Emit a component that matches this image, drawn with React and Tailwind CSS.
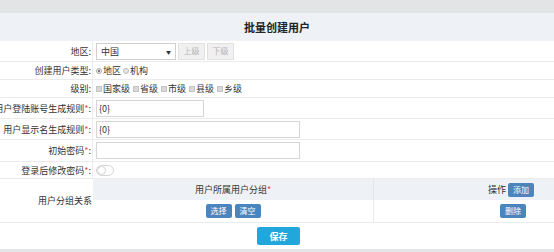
import React from "react";

const Row = ({ label, req, h, children, noColon }) => (
  <div className={`flex border-b border-[#ebebeb] ${h}`}>
    <div className="w-[93px] shrink-0 flex items-center justify-end pr-[1px] border-r border-[#ebebeb] whitespace-nowrap">
      <span>{label}</span>
      {req && <span className="text-[#e5484d]">*</span>}
      {!noColon && <span>:</span>}
    </div>
    <div className="flex-1 flex items-center pl-[3px]">{children}</div>
  </div>
);

const Check = ({ label }) => (
  <span className="flex items-center mr-[3px]">
    <span className="w-[6px] h-[6px] bg-[#d8d8d8] border border-[#c4c4c4] mr-[1px]" />
    {label}
  </span>
);

const Btn = ({ children, cls = "" }) => (
  <span className={`inline-flex items-center justify-center w-[26px] h-[14px] bg-[#4a85bd] text-white text-[8px] rounded-[2px] ${cls}`}>
    {children}
  </span>
);

export default function App() {
  return (
    <div className="w-[554px] h-[252px] bg-white overflow-hidden text-[9px] text-[#333] font-['Noto_Sans_CJK_SC',sans-serif] leading-none">
      <div className="h-[13px] bg-[#e3e4e6]" />
      <div className="h-[28px] bg-[#eef1f5] flex items-center justify-center text-[11px] font-bold text-[#222]">
        批量创建用户
      </div>

      <Row label="地区" h="h-[21px]">
        <div className="w-[80px] h-[17px] border border-[#cfcfcf] flex items-center justify-between px-[4px] bg-white">
          <span>中国</span>
          <span className="text-[5px] text-[#333]">▼</span>
        </div>
        <span className="ml-[2px] w-[27px] h-[17px] bg-[#f0f0f0] border border-[#e2e2e2] text-[#b5b5b5] text-[8px] flex items-center justify-center">上级</span>
        <span className="ml-[2px] w-[27px] h-[17px] bg-[#f0f0f0] border border-[#e2e2e2] text-[#b5b5b5] text-[8px] flex items-center justify-center">下级</span>
      </Row>

      <Row label="创建用户类型" h="h-[18px]">
        <span className="flex items-center mr-[2px]">
          <span className="w-[6px] h-[6px] rounded-full border border-[#aaa] bg-[#eee] flex items-center justify-center mr-[1px]">
            <span className="w-[2px] h-[2px] rounded-full bg-[#555]" />
          </span>
          地区
        </span>
        <span className="flex items-center">
          <span className="w-[6px] h-[6px] rounded-full border border-[#bbb] bg-[#e6e6e6] mr-[1px]" />
          机构
        </span>
      </Row>

      <Row label="级别" h="h-[18px]">
        <Check label="国家级" />
        <Check label="省级" />
        <Check label="市级" />
        <Check label="县级" />
        <Check label="乡级" />
      </Row>

      <Row label="用户登陆账号生成规则" req h="h-[21px]">
        <div className="w-[108px] h-[17px] border border-[#d6d6d6] flex items-center px-[2px]">{"{0}"}</div>
      </Row>

      <Row label="用户显示名生成规则" req h="h-[21px]">
        <div className="w-[204px] h-[17px] border border-[#d6d6d6] flex items-center px-[2px]">{"{0}"}</div>
      </Row>

      <Row label="初始密码" req h="h-[22px]">
        <div className="w-[204px] h-[17px] border border-[#d6d6d6]" />
      </Row>

      <Row label="登录后修改密码" req h="h-[17px]">
        <div className="w-[18px] h-[11px] rounded-full border border-[#d4d4d4] bg-white flex items-center">
          <span className="w-[9px] h-[9px] rounded-full bg-white border border-[#d4d4d4]" />
        </div>
      </Row>

      <div className="flex border-b border-[#ebebeb] h-[44px]">
        <div className="w-[93px] shrink-0 flex items-center justify-end pr-[1px] whitespace-nowrap">
          用户分组关系
        </div>
        <div className="flex-1 flex flex-col">
          <div className="h-[21px] bg-[#eef1f5] flex">
            <div className="w-[281px] border-r border-[#e2e5ea] flex items-center justify-center">
              用户所属用户分组<span className="text-[#e5484d]">*</span>
            </div>
            <div className="flex-1 flex items-center justify-end pr-[20px]">
              <span className="mr-[2px]">操作</span>
              <Btn>添加</Btn>
            </div>
          </div>
          <div className="flex-1 flex">
            <div className="w-[281px] border-r border-[#ebebeb] flex items-center justify-center gap-[3px]">
              <Btn>选择</Btn>
              <Btn>清空</Btn>
            </div>
            <div className="flex-1 flex items-center justify-end pr-[28px]">
              <Btn>删除</Btn>
            </div>
          </div>
        </div>
      </div>

      <div className="h-[26px] flex items-center justify-center pl-[3px]">
        <span className="w-[43px] h-[18px] bg-[#22a7dc] rounded-[2px] text-white font-bold text-[9px] flex items-center justify-center">保存</span>
      </div>
      <div className="h-[3px] bg-[#e3e4e6]" />
    </div>
  );
}
